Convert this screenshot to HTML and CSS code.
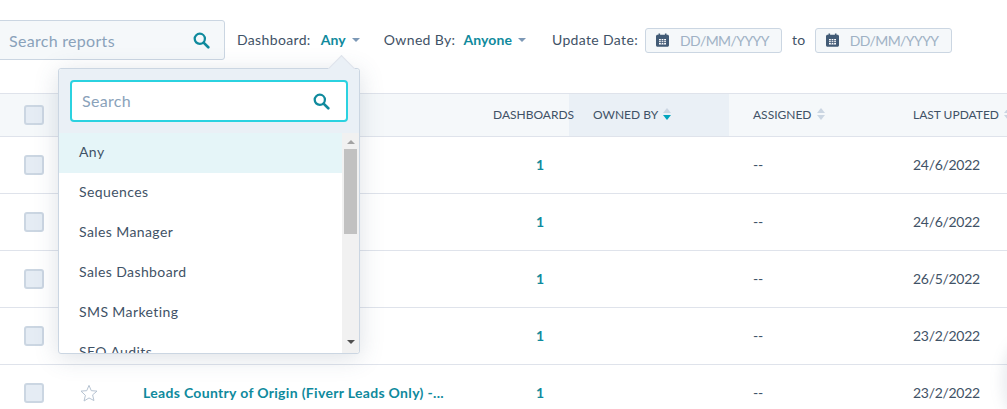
FILE: index.html
```html
<!DOCTYPE html>
<html lang="en">
<head>
    <meta charset="UTF-8">
    <meta name="viewport" content="width=device-width, initial-scale=1.0">
    <title>Reports</title>
    <link rel="stylesheet" href="styles.css">
</head>
<body>

<svg class="icon-defs" width="0" height="0">
    <symbol id="search" viewBox="0 0 18 18">
        <circle cx="7.2" cy="7.2" r="5.4" fill="none" stroke="currentColor" stroke-width="2.4"/>
        <path d="M11.2 11.2 L16.2 16.2" fill="none" stroke="currentColor" stroke-width="2.8" stroke-linecap="round"/>
    </symbol>
    <symbol id="calendar" viewBox="0 0 13 14">
        <path d="M1.5 1.8h1V.6h1.6v1.2h4.8V.6h1.6v1.2h1c.8 0 1.500.7 1.500 1.500v9c0 .8-.7 1.500-1.500 1.500h-10C.7 13.800 0 13.100 0 12.300v-9c0-.8.7-1.500 1.500-1.500z" fill="#425b76"/>
        <path d="M3 6h7v5.500H3z" fill="#fff"/>
        <path d="M3 7.700h7M3 9.500h7M5.300 6v5.500M7.700 6v5.500" stroke="#425b76" stroke-width=".8"/>
    </symbol>
    <symbol id="star" viewBox="0 0 20 20">
        <path d="M10 1.500l2.500 5.900 6.400.5-4.900 4.200 1.500 6.300L10 15.500l-5.500 3.400L6 12.600 1.100 7.900l6.400-.5z" fill="none" stroke="#b5c2d0" stroke-width="1.100"/>
    </symbol>
</svg>

<div class="toolbar">
    <div class="report-search">
        <span>Search reports</span>
        <svg class="search-icon"><use href="#search"/></svg>
    </div>
    <div class="filter dash-filter">Dashboard: <b>Any</b><i class="caret"></i></div>
    <div class="filter">Owned By: <b>Anyone</b><i class="caret"></i></div>
    <div class="filter date-filter">
        Update Date:
        <div class="date-input"><svg><use href="#calendar"/></svg>DD/MM/YYYY</div>
        <span class="date-to">to</span>
        <div class="date-input"><svg><use href="#calendar"/></svg>DD/MM/YYYY</div>
    </div>
</div>

<div class="board">
    <div class="row head">
        <div class="cell"><span class="check"></span></div>
        <div class="cell"></div>
        <div class="cell"></div>
        <div class="cell col-dash">DASHBOARDS</div>
        <div class="cell col-text sorted">OWNED BY <span class="sort"><i class="up"></i><i class="down on"></i></span></div>
        <div class="cell col-text">ASSIGNED <span class="sort"><i class="up"></i><i class="down"></i></span></div>
        <div class="cell col-text">LAST UPDATED <span class="sort"><i class="up"></i><i class="down"></i></span></div>
    </div>
    <div class="row">
        <div class="cell"><span class="check"></span></div>
        <div class="cell"></div>
        <div class="cell"></div>
        <div class="cell col-num">1</div>
        <div class="cell col-text"></div>
        <div class="cell col-text">--</div>
        <div class="cell col-text">24/6/2022</div>
    </div>
    <div class="row">
        <div class="cell"><span class="check"></span></div>
        <div class="cell"></div>
        <div class="cell"></div>
        <div class="cell col-num">1</div>
        <div class="cell col-text"></div>
        <div class="cell col-text">--</div>
        <div class="cell col-text">24/6/2022</div>
    </div>
    <div class="row">
        <div class="cell"><span class="check"></span></div>
        <div class="cell"></div>
        <div class="cell"></div>
        <div class="cell col-num">1</div>
        <div class="cell col-text"></div>
        <div class="cell col-text">--</div>
        <div class="cell col-text">26/5/2022</div>
    </div>
    <div class="row">
        <div class="cell"><span class="check"></span></div>
        <div class="cell"></div>
        <div class="cell"></div>
        <div class="cell col-num">1</div>
        <div class="cell col-text"></div>
        <div class="cell col-text">--</div>
        <div class="cell col-text">23/2/2022</div>
    </div>
    <div class="row">
        <div class="cell"><span class="check"></span></div>
        <div class="cell"><svg class="star"><use href="#star"/></svg></div>
        <div class="cell name">Leads Country of Origin (Fiverr Leads Only) -...</div>
        <div class="cell col-num">1</div>
        <div class="cell col-text"></div>
        <div class="cell col-text">--</div>
        <div class="cell col-text">23/2/2022</div>
    </div>
</div>

<div class="dropdown">
    <div class="dropdown-top">
        <div class="dropdown-search">
            <span>Search</span>
            <svg class="search-icon"><use href="#search"/></svg>
        </div>
    </div>
    <div class="dropdown-body">
        <ul class="options">
            <li class="selected">Any</li>
            <li>Sequences</li>
            <li>Sales Manager</li>
            <li>Sales Dashboard</li>
            <li>SMS Marketing</li>
            <li>SEO Audits</li>
        </ul>
        <div class="scrollbar">
            <i class="arrow-up"></i>
            <div class="thumb"></div>
            <i class="arrow-down"></i>
        </div>
    </div>
</div>

<div class="help-shadow"></div>

</body>
</html>
```

FILE: styles.css
```css
* {
    box-sizing: border-box;
}

html, body {
    height: 100%;
}

body {
    font-family: 'Lato', 'Open Sans', sans-serif;
    font-size: 14px;
    color: #3f5266;
    background-color: white;
    margin: 0;
    overflow: hidden;
    position: relative;
}

.icon-defs {
    position: absolute;
}

.toolbar {
    height: 93px;
    padding-top: 20px;
    display: flex;
    align-items: flex-start;
}

.report-search {
    width: 235px;
    height: 40px;
    margin-left: -10px;
    padding: 0 14px 0 18px;
    display: flex;
    justify-content: space-between;
    align-items: center;
    background-color: #f5f8fa;
    border: 1px solid #cbd6e2;
    border-radius: 3px;
    font-size: 16px;
    letter-spacing: 0.3px;
    color: #8aa2ba;
}

.search-icon {
    width: 17px;
    height: 17px;
    color: #0f8a9d;
}

.filter {
    margin-left: 12px;
    height: 40px;
    display: flex;
    align-items: center;
    white-space: nowrap;
    letter-spacing: 0.35px;
    padding-bottom: 2px;
}

.filter b {
    margin-left: 8px;
    color: #0f8a9d;
    font-weight: 700;
    letter-spacing: 0.1px;
}

.dash-filter b {
    margin-left: 10px;
}

.filter + .filter {
    margin-left: 24px;
}

.caret {
    width: 0;
    height: 0;
    margin-left: 6px;
    margin-top: 2px;
    border-left: 4.5px solid transparent;
    border-right: 4.5px solid transparent;
    border-top: 4.5px solid #7c98b6;
}

.filter.date-filter {
    margin-left: 26px;
}

.date-input {
    width: 137px;
    height: 25px;
    margin-left: 7px;
    margin-top: 2px;
    padding-left: 10px;
    display: flex;
    align-items: center;
    background-color: #f5f8fa;
    border: 1px solid #cbd6e2;
    border-radius: 3px;
    color: #a0b2c5;
    letter-spacing: -0.6px;
}

.date-input svg {
    width: 13px;
    height: 14px;
    margin-right: 11px;
}

.date-to {
    margin-left: 10px;
    margin-right: 2px;
}

.board {
    border-top: 1px solid #dfe3eb;
}

.row {
    display: grid;
    grid-template-columns: 68px 75px 326px 100px 160px 160px 118px;
    height: 57px;
    border-bottom: 1px solid #dfe3eb;
}

.row.head {
    height: 43px;
    background-color: #f5f8fa;
    font-size: 12px;
}

.cell {
    display: flex;
    align-items: center;
    white-space: nowrap;
}

.cell:first-child {
    padding-left: 24px;
}

.check {
    width: 20px;
    height: 20px;
    background-color: #e5ecf4;
    border: 2px solid #cbd6e2;
    border-radius: 3px;
}

.star {
    width: 18px;
    height: 18px;
    margin-left: 12px;
}

.name {
    color: #0f8a9d;
    font-weight: 700;
    letter-spacing: 0.32px;
    padding-bottom: 2px;
}

.col-dash {
    position: relative;
    z-index: 1;
    padding-left: 24px;
    padding-bottom: 2px;
}

.col-num {
    padding-left: 67px;
    padding-bottom: 2px;
    color: #0f8a9d;
    font-weight: 700;
}

.col-text {
    padding-left: 24px;
    padding-bottom: 2px;
    letter-spacing: -0.3px;
}

.head .col-text {
    letter-spacing: 0;
}

.sorted {
    background-color: #eaf0f6;
}

.sort {
    margin-left: 5px;
    display: flex;
    flex-direction: column;
    gap: 2px;
}

.sort i {
    width: 0;
    height: 0;
    border-left: 4px solid transparent;
    border-right: 4px solid transparent;
}

.sort .up {
    border-bottom: 5px solid #cbd6e2;
}

.sort .down {
    border-top: 5px solid #cbd6e2;
}

.sort .down.on {
    border-top-color: #00a4bd;
}

.dropdown {
    position: absolute;
    left: 58px;
    top: 68px;
    width: 302px;
    height: 286px;
    background-color: white;
    border: 1px solid #cbd6e2;
    border-radius: 3px;
    box-shadow: 0 4px 24px rgba(66, 91, 118, 0.18);
}

/* little arrow pointing up at the filter */
.dropdown::before {
    content: "";
    position: absolute;
    left: 273px;
    top: -10px;
    width: 18px;
    height: 18px;
    background-color: #eaf0f6;
    transform: rotate(45deg);
    border-left: 1px solid #dfe3eb;
    border-top: 1px solid #dfe3eb;
}

.dropdown-top {
    position: relative;
    height: 64px;
    padding: 11px 11px 0;
    background-color: #eaf0f6;
    border-radius: 3px 3px 0 0;
}

.dropdown-search {
    height: 42px;
    padding: 0 16px 2px 10px;
    display: flex;
    justify-content: space-between;
    align-items: center;
    background-color: white;
    border: 2px solid #2bd2e0;
    border-radius: 4px;
    font-size: 16px;
    letter-spacing: 0.3px;
    color: #8aa2ba;
}

.dropdown-search .search-icon {
    margin-top: 2px;
}

.dropdown-body {
    height: 220px;
    display: flex;
    overflow: hidden;
    border-radius: 0 0 3px 3px;
}

.options {
    flex: 1;
    margin: 0;
    padding: 0;
    list-style: none;
    letter-spacing: 0.4px;
}

.options li {
    height: 40px;
    padding: 0 0 3px 20px;
    display: flex;
    align-items: center;
}

.options .selected {
    background-color: #e5f5f8;
}

.scrollbar {
    width: 17px;
    padding: 7px 2px 0;
    display: flex;
    flex-direction: column;
    align-items: center;
    background-color: #f1f1f1;
}

.thumb {
    width: 13px;
    height: 85px;
    margin-top: 5px;
    background-color: #c1c1c1;
}

.arrow-up, .arrow-down {
    width: 0;
    height: 0;
    border-left: 4px solid transparent;
    border-right: 4px solid transparent;
}

.arrow-up {
    border-bottom: 4px solid #a3a3a3;
}

.arrow-down {
    margin-top: 106px;
    border-top: 4px solid #505050;
}

.help-shadow {
    position: absolute;
    right: -34px;
    bottom: -12px;
    width: 40px;
    height: 80px;
    border-radius: 50%;
    background-color: rgba(66, 91, 118, 0.1);
    filter: blur(6px);
}
```
